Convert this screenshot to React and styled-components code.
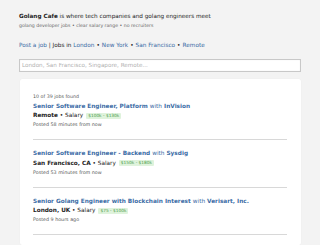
import React from "react";
import styled, { createGlobalStyle } from "styled-components";

const GlobalStyle = createGlobalStyle`
  html, body {
    margin: 0;
    padding: 0;
    background: #f3f3f3;
  }
  body {
    font-family: "DejaVu Sans", Verdana, sans-serif;
    color: #222;
  }
`;

const Root = styled.div`
  padding: 12px 19px 0 19px;
  width: 282px;
`;

const Intro = styled.div`
  font-size: 5.7px;
  line-height: 8px;
  color: #222;
  white-space: nowrap;
`;

const Brand = styled.strong`
  font-weight: bold;
`;

const Tagline = styled.div`
  font-size: 4.65px;
  line-height: 6px;
  color: #666;
  margin-top: 2.5px;
  white-space: nowrap;
`;

const Nav = styled.div`
  margin-top: 12px;
  font-size: 5.75px;
  line-height: 8px;
  color: #222;
  white-space: nowrap;
`;

const NavLink = styled.a`
  color: #3a6ba5;
  text-decoration: none;
`;

const Sep = styled.span`
  margin: 0 2px;
`;

const Search = styled.input`
  display: block;
  box-sizing: border-box;
  width: 282px;
  height: 13px;
  margin-top: 10px;
  padding: 0 2px;
  border: 1px solid #c8c8c8;
  box-shadow: inset 0 0 1px rgba(0, 0, 0, 0.15);
  background: #fff;
  font-family: "DejaVu Sans", Verdana, sans-serif;
  font-size: 5.65px;
  color: #222;
  outline: none;

  &::placeholder {
    color: #b0b0b0;
  }
`;

const Card = styled.div`
  margin: 7px 0 0 1px;
  background: #fff;
  border-radius: 2px;
  box-shadow: 0 0 1px rgba(0, 0, 0, 0.08);
  padding: 15.5px 14px 10px 13px;
`;

const Count = styled.div`
  font-size: 4.75px;
  line-height: 5px;
  color: #555;
`;

const Job = styled.div`
  padding-top: ${(p) => (p.first ? "2.5px" : "9px")};
  padding-bottom: 10px;
  border-bottom: 1px solid #d8d8d8;
`;

const Title = styled.a`
  display: block;
  font-size: 5.77px;
  line-height: 9.5px;
  font-weight: bold;
  color: #3a6ba5;
  text-decoration: none;
  white-space: nowrap;
`;

const With = styled.span`
  font-weight: normal;
`;

const Meta = styled.div`
  font-size: 5.78px;
  line-height: 9px;
  color: #222;
  display: flex;
  align-items: center;
  white-space: nowrap;
`;

const Place = styled.strong`
  font-weight: bold;
`;

const Salary = styled.span`
  margin-left: 3px;
  background: #dff3dc;
  color: #4a9a4a;
  font-size: 4.3px;
  line-height: 6px;
  padding: 0 2px;
  border-radius: 1px;
`;

const Posted = styled.div`
  font-size: 4.8px;
  line-height: 9px;
  color: #555;
`;

const jobs = [
  {
    role: "Senior Software Engineer, Platform",
    company: "InVision",
    place: "Remote",
    salary: "$100k - $130k",
    posted: "Posted 58 minutes from now",
  },
  {
    role: "Senior Software Engineer - Backend",
    company: "Sysdig",
    place: "San Francisco, CA",
    salary: "$150k - $180k",
    posted: "Posted 53 minutes from now",
  },
  {
    role: "Senior Golang Engineer with Blockchain Interest",
    company: "Verisart, Inc.",
    place: "London, UK",
    salary: "$75 - $100k",
    posted: "Posted 9 hours ago",
  },
];

export default function App() {
  return (
    <Root>
      <GlobalStyle />
      <Intro>
        <Brand>Golang Cafe</Brand> is where tech companies and golang engineers meet
      </Intro>
      <Tagline>golang developer jobs • clear salary range • no recruiters</Tagline>
      <Nav>
        <NavLink href="#">Post a job</NavLink> | Jobs in <NavLink href="#">London</NavLink>
        <Sep>•</Sep>
        <NavLink href="#">New York</NavLink>
        <Sep>•</Sep>
        <NavLink href="#">San Francisco</NavLink>
        <Sep>•</Sep>
        <NavLink href="#">Remote</NavLink>
      </Nav>
      <Search placeholder="London, San Francisco, Singapore, Remote..." />
      <Card>
        <Count>10 of 39 jobs found</Count>
        {jobs.map((job, i) => (
          <Job key={job.company} first={i === 0}>
            <Title href="#">
              {job.role} <With>with</With> {job.company}
            </Title>
            <Meta>
              <Place>{job.place}</Place>&nbsp;• Salary
              <Salary>{job.salary}</Salary>
            </Meta>
            <Posted>{job.posted}</Posted>
          </Job>
        ))}
      </Card>
    </Root>
  );
}
